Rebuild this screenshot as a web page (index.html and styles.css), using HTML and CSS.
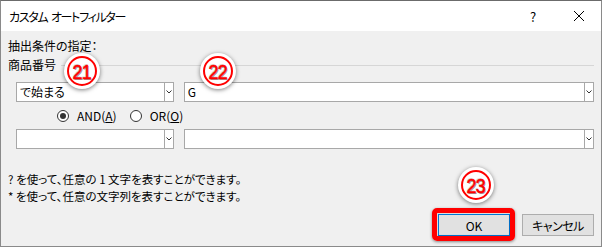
FILE: index.html
```html
<!DOCTYPE html>
<html lang="ja">
<head>
<meta charset="utf-8">
<link rel="stylesheet" href="styles.css">
</head>
<body>
<div class="window">
  <div class="titlebar">
    <span class="title">カスタム オートフィルター</span>
    <span class="help">?</span>
    <span class="close">
      <svg width="12" height="12" viewBox="0 0 12 12"><path d="M1 1L11 11M11 1L1 11" stroke="#000" stroke-width="1" fill="none"/></svg>
    </span>
  </div>
  <div class="content">
    <div class="label first">抽出条件の指定：</div>
    <div class="group">
      <span class="label">商品番号</span>
      <span class="sep"></span>
    </div>
    <div class="row combos">
      <div class="combo small">
        <span class="value">で始まる</span>
        <span class="arrow"><svg width="6" height="4" viewBox="0 0 6 4"><path d="M0.5 0.5L3 3L5.5 0.5" stroke="#333" stroke-width="1" fill="none"/></svg></span>
      </div>
      <div class="combo big">
        <span class="value">G</span>
        <span class="arrow"><svg width="6" height="4" viewBox="0 0 6 4"><path d="M0.5 0.5L3 3L5.5 0.5" stroke="#333" stroke-width="1" fill="none"/></svg></span>
      </div>
    </div>
    <div class="row radios">
      <span class="radio checked"></span><span class="rlabel">AND(<u>A</u>)</span>
      <span class="radio"></span><span class="rlabel">OR(<u>O</u>)</span>
    </div>
    <div class="row combos second">
      <div class="combo small">
        <span class="value"></span>
        <span class="arrow"><svg width="6" height="4" viewBox="0 0 6 4"><path d="M0.5 0.5L3 3L5.5 0.5" stroke="#333" stroke-width="1" fill="none"/></svg></span>
      </div>
      <div class="combo big">
        <span class="value"></span>
        <span class="arrow"><svg width="6" height="4" viewBox="0 0 6 4"><path d="M0.5 0.5L3 3L5.5 0.5" stroke="#333" stroke-width="1" fill="none"/></svg></span>
      </div>
    </div>
    <div class="hint first-hint">? を使って、任意の 1 文字を表すことができます。</div>
    <div class="hint">* を使って、任意の文字列を表すことができます。</div>
    <div class="buttons">
      <div class="okwrap">
        <button class="btn ok">OK</button>
        <span class="highlight"></span>
      </div>
      <button class="btn cancel">キャンセル</button>
    </div>
  </div>
  <div class="badge b21"><span class="ring"><span class="num">21</span></span></div>
  <div class="badge b22"><span class="ring"><span class="num">22</span></span></div>
  <div class="badge b23"><span class="ring"><span class="num">23</span></span></div>
</div>
</body>
</html>
```
FILE: styles.css
```css
html, body {
  margin: 0;
  padding: 0;
  background: #6b6b6b;
}
body {
  font-family: "Noto Sans CJK JP", "Noto Sans", sans-serif;
  font-size: 12px;
  color: #000;
  font-feature-settings: "palt";
}
.window {
  position: relative;
  width: 600px;
  height: 245px;
  border: 1px solid #8a8a8a;
  border-top-color: #6b6b6b;
  background: #f0f0f0;
  overflow: hidden;
}
.titlebar {
  height: 30px;
  background: #fff;
  display: flex;
  align-items: center;
  padding-left: 8px;
}
.title {
  flex: 1;
  font-size: 12px;
  letter-spacing: -1.3px;
  word-spacing: 2px;
}
.help {
  width: 14px;
  font-size: 13px;
  margin-right: 33px;
  text-align: center;
}
.close {
  display: flex;
  width: 12px;
  margin-right: 16px;
}
.content {
  padding: 0 7px 0 7px;
}
.label {
  line-height: 16px;
}
.label.first {
  margin-top: 7px;
}
.group {
  display: flex;
  align-items: center;
  margin-top: 3px;
}
.sep {
  flex: 1;
  height: 1px;
  background: #d6d6d6;
  margin-left: 5px;
}
.row {
  display: flex;
}
.combos {
  margin-top: 9px;
  padding-left: 8px;
  gap: 10px;
}
.combos.second {
  margin-top: 5px;
}
.combo {
  box-sizing: border-box;
  height: 20px;
  background: #fff;
  border: 1px solid #a8a8a8;
  display: flex;
}
.combo.small { width: 158px; }
.combo.big { width: 411px; }
.value {
  flex: 1;
  line-height: 18px;
  padding-left: 3px;
}
.arrow {
  width: 8px;
  border-left: 1px solid #a8a8a8;
  display: flex;
  align-items: center;
  justify-content: center;
}
.radios {
  margin-top: 6px;
  align-items: center;
  height: 16px;
  padding-left: 49px;
}
.radio {
  box-sizing: border-box;
  width: 12px;
  height: 12px;
  border: 1px solid #333;
  border-radius: 50%;
  background: #fff;
  display: flex;
  align-items: center;
  justify-content: center;
}
.radio.checked::after {
  content: "";
  width: 6px;
  height: 6px;
  border-radius: 50%;
  background: #333;
}
.rlabel {
  margin-left: 8px;
  margin-right: 13px;
  font-size: 12px;
  line-height: 16px;
}
.hint {
  line-height: 17px;
  font-size: 11.5px;
}
.first-hint {
  margin-top: 22px;
}
.buttons {
  display: flex;
  justify-content: flex-end;
  gap: 12px;
  margin-top: 9px;
}
.okwrap {
  position: relative;
  display: flex;
}
.btn {
  box-sizing: border-box;
  width: 72px;
  height: 22px;
  background: #e1e1e1;
  border: 1px solid #adadad;
  font-family: inherit;
  font-size: 12px;
  font-feature-settings: "palt";
  padding: 0;
  color: #000;
}
.btn.cancel {
  letter-spacing: -0.5px;
}
.btn.ok {
  border-color: #0078d7;
}
.highlight {
  position: absolute;
  left: -6px;
  top: -6px;
  right: -5px;
  bottom: -5px;
  border: 5px solid #ff0000;
  border-radius: 5px;
  box-shadow: 0 1px 3px rgba(0,0,0,0.45), inset 0 0 2px rgba(0,0,0,0.3);
}
.badge {
  position: absolute;
  width: 36px;
  height: 36px;
  border-radius: 50%;
  background: #fff;
  box-shadow: 0 1px 4px rgba(0,0,0,0.5);
  display: flex;
  align-items: center;
  justify-content: center;
}
.ring {
  box-sizing: border-box;
  width: 30px;
  height: 30px;
  border: 2px solid #f00;
  border-radius: 50%;
  display: flex;
  align-items: center;
  justify-content: center;
}
.num {
  color: #f00;
  font-family: "Liberation Sans", sans-serif;
  font-weight: normal;
  font-size: 21px;
  line-height: 21px;
  letter-spacing: -1px;
  display: inline-block;
  transform: scaleX(0.85);
  text-shadow: 1px 1px 0 #999, -1px -1px 0 #ddd;
  -webkit-text-stroke: 0.6px #f00;
}
.b21 { left: 63px; top: 52px; }
.b22 { left: 199px; top: 52px; }
.b23 { left: 457px; top: 166px; }
```
